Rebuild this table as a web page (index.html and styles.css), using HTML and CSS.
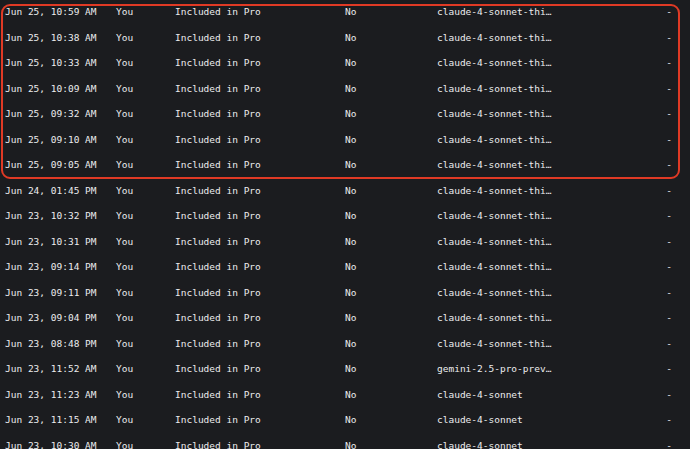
FILE: index.html
```html
<!DOCTYPE html>
<html lang="en">
<head>
<meta charset="utf-8">
<title>Usage events</title>
<link rel="stylesheet" href="styles.css">
</head>
<body>
<div class="table">
  <div class="row"><span>Jun 25, 10:59 AM</span><span>You</span><span>Included in Pro</span><span>No</span><span class="model">claude-4-sonnet-thinking</span><span class="cost">-</span></div>
  <div class="row"><span>Jun 25, 10:38 AM</span><span>You</span><span>Included in Pro</span><span>No</span><span class="model">claude-4-sonnet-thinking</span><span class="cost">-</span></div>
  <div class="row"><span>Jun 25, 10:33 AM</span><span>You</span><span>Included in Pro</span><span>No</span><span class="model">claude-4-sonnet-thinking</span><span class="cost">-</span></div>
  <div class="row"><span>Jun 25, 10:09 AM</span><span>You</span><span>Included in Pro</span><span>No</span><span class="model">claude-4-sonnet-thinking</span><span class="cost">-</span></div>
  <div class="row"><span>Jun 25, 09:32 AM</span><span>You</span><span>Included in Pro</span><span>No</span><span class="model">claude-4-sonnet-thinking</span><span class="cost">-</span></div>
  <div class="row"><span>Jun 25, 09:10 AM</span><span>You</span><span>Included in Pro</span><span>No</span><span class="model">claude-4-sonnet-thinking</span><span class="cost">-</span></div>
  <div class="row"><span>Jun 25, 09:05 AM</span><span>You</span><span>Included in Pro</span><span>No</span><span class="model">claude-4-sonnet-thinking</span><span class="cost">-</span></div>
  <div class="row"><span>Jun 24, 01:45 PM</span><span>You</span><span>Included in Pro</span><span>No</span><span class="model">claude-4-sonnet-thinking</span><span class="cost">-</span></div>
  <div class="row"><span>Jun 23, 10:32 PM</span><span>You</span><span>Included in Pro</span><span>No</span><span class="model">claude-4-sonnet-thinking</span><span class="cost">-</span></div>
  <div class="row"><span>Jun 23, 10:31 PM</span><span>You</span><span>Included in Pro</span><span>No</span><span class="model">claude-4-sonnet-thinking</span><span class="cost">-</span></div>
  <div class="row"><span>Jun 23, 09:14 PM</span><span>You</span><span>Included in Pro</span><span>No</span><span class="model">claude-4-sonnet-thinking</span><span class="cost">-</span></div>
  <div class="row"><span>Jun 23, 09:11 PM</span><span>You</span><span>Included in Pro</span><span>No</span><span class="model">claude-4-sonnet-thinking</span><span class="cost">-</span></div>
  <div class="row"><span>Jun 23, 09:04 PM</span><span>You</span><span>Included in Pro</span><span>No</span><span class="model">claude-4-sonnet-thinking</span><span class="cost">-</span></div>
  <div class="row"><span>Jun 23, 08:48 PM</span><span>You</span><span>Included in Pro</span><span>No</span><span class="model">claude-4-sonnet-thinking</span><span class="cost">-</span></div>
  <div class="row"><span>Jun 23, 11:52 AM</span><span>You</span><span>Included in Pro</span><span>No</span><span class="model">gemini-2.5-pro-preview</span><span class="cost">-</span></div>
  <div class="row"><span>Jun 23, 11:23 AM</span><span>You</span><span>Included in Pro</span><span>No</span><span class="model">claude-4-sonnet</span><span class="cost">-</span></div>
  <div class="row"><span>Jun 23, 11:15 AM</span><span>You</span><span>Included in Pro</span><span>No</span><span class="model">claude-4-sonnet</span><span class="cost">-</span></div>
  <div class="row"><span>Jun 23, 10:30 AM</span><span>You</span><span>Included in Pro</span><span>No</span><span class="model">claude-4-sonnet</span><span class="cost">-</span></div>
  <div class="highlight"></div>
</div>
</body>
</html>
```
FILE: styles.css
```css
html, body {
  margin: 0;
  padding: 0;
  background: #1b1c1f;
  overflow: hidden;
}
body {
  width: 690px;
  height: 449px;
  font-family: "DejaVu Sans Mono", "Liberation Mono", monospace;
  font-size: 9.5px;
  color: #ececee;
}
.table {
  position: relative;
  margin-top: -1px;
}
.row {
  display: grid;
  grid-template-columns: 111px 59px 170px 92px 115px 1fr;
  height: 25.53px;
  line-height: 25.53px;
  padding-left: 5px;
  padding-right: 18px;
  white-space: nowrap;
}
.model {
  overflow: hidden;
  text-overflow: ellipsis;
}
.cost {
  text-align: right;
}
.highlight {
  position: absolute;
  left: 1px;
  top: 5px;
  width: 675px;
  height: 171px;
  border: 2px solid #e03a25;
  border-radius: 9px;
  pointer-events: none;
}
```
